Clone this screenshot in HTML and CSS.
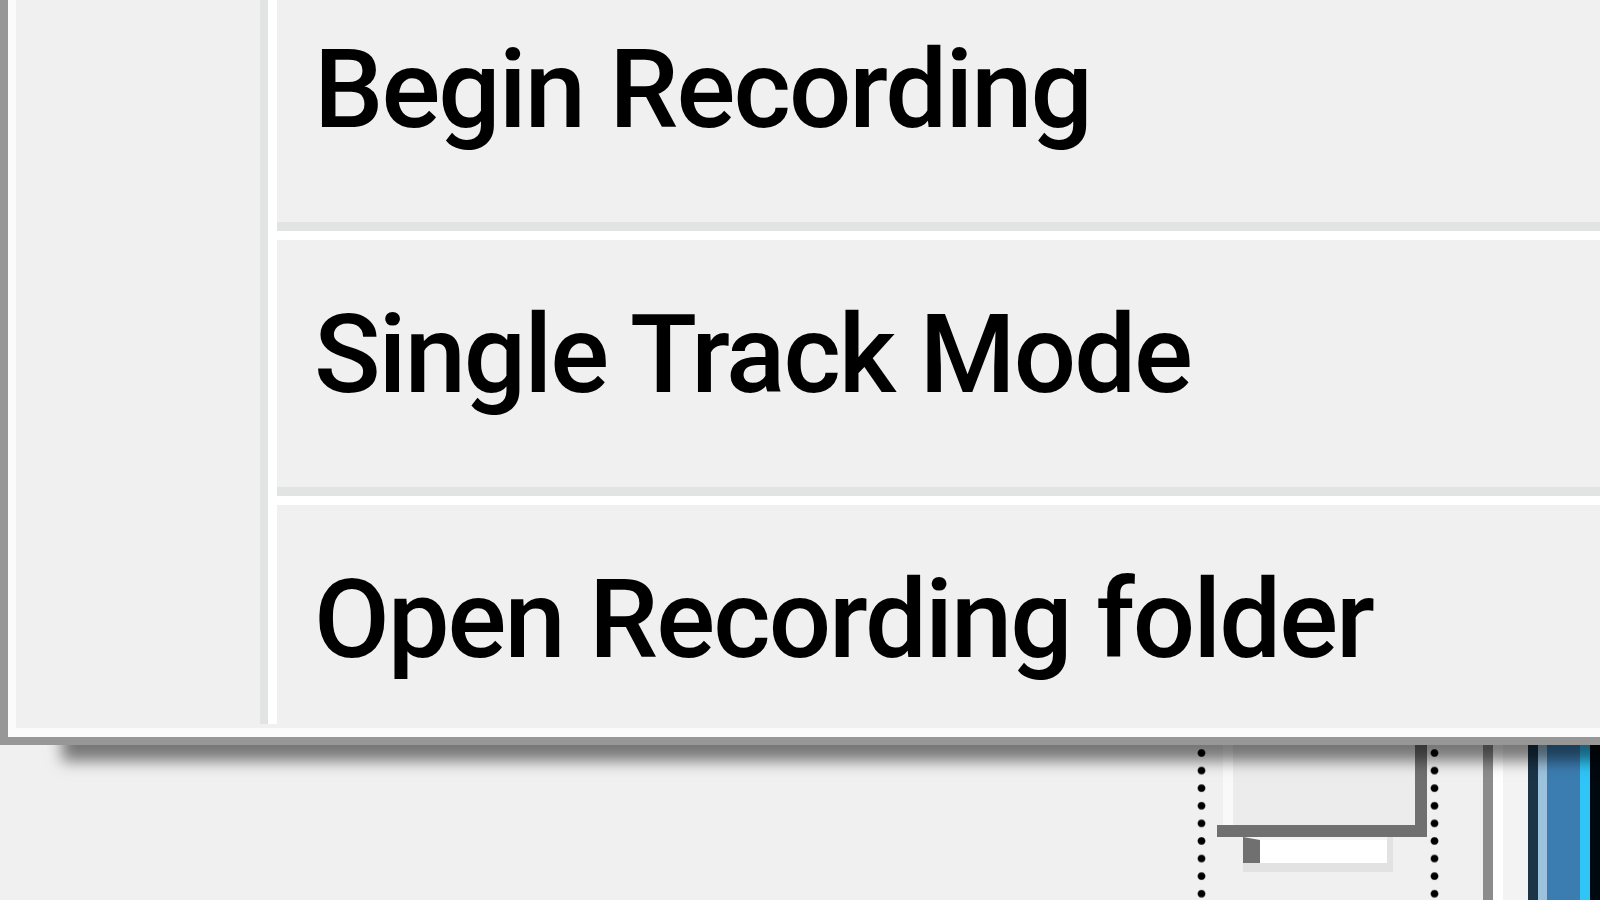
FILE: index.html
```html
<!DOCTYPE html>
<html lang="en">
<head>
<meta charset="utf-8">
<title>Recording menu</title>
<link rel="stylesheet" href="styles.css">
</head>
<body>
<div class="screen">
  <div class="menu">
    <div class="menu-body">
      <div class="gutter"></div>
      <ul class="list">
        <li class="item">Begin Recording</li>
        <li class="sep"></li>
        <li class="item">Single Track Mode</li>
        <li class="sep"></li>
        <li class="item">Open Recording folder</li>
      </ul>
    </div>
  </div>
  <div class="below">
    <div class="focus">
      <div class="dots"></div>
      <div class="focus-content">
        <div class="raised"></div>
        <div class="field"></div>
      </div>
      <div class="dots"></div>
    </div>
    <div class="vline"></div>
    <div class="vlight"></div>
    <div class="blue"></div>
  </div>
</div>
</body>
</html>
```
FILE: styles.css
```css
html, body {
  margin: 0;
  padding: 0;
  background: #f0f0f0;
}
.screen {
  width: 1600px;
  height: 900px;
  overflow: hidden;
  background: #f0f0f0;
  font-family: Roboto, "Noto Sans", sans-serif;
}
.menu {
  position: relative;
  z-index: 1;
  width: 1700px;
  height: 745px;
  box-sizing: border-box;
  border-left: 8px solid #979797;
  border-bottom: 8px solid #979797;
  background: #f0f0f0;
  box-shadow: 62px 16px 14px rgba(0, 0, 0, 0.5);
}
.menu-body {
  display: flex;
  height: 100%;
  box-sizing: border-box;
  border-left: 8px solid #fbfbfb;
  border-bottom: 9px solid #fbfbfb;
  padding-bottom: 4px;
}
.gutter {
  width: 244px;
  flex: none;
  border-right: 8px solid #e2e3e3;
}
.list {
  list-style: none;
  margin: 0;
  padding: 4px 0 0 0;
  flex: 1;
  border-left: 9px solid #ffffff;
}
.item {
  height: 190px;
  box-sizing: border-box;
  padding: 0 0 19px 37px;
  line-height: 171px;
  font-size: 110px;
  font-weight: 500;
  letter-spacing: -2px;
  color: #000;
  white-space: nowrap;
}
.sep {
  height: 75px;
  box-sizing: border-box;
  padding-top: 28px;
}
.sep::before {
  content: "";
  display: block;
  height: 9px;
  background: #e2e3e3;
  border-bottom: 9px solid #ffffff;
}
.below {
  display: flex;
  height: 155px;
}
.focus {
  display: flex;
  margin-left: 1197px;
  width: 242px;
}
.dots {
  width: 9px;
  flex: none;
  background-image: radial-gradient(circle, #000 3.2px, rgba(0, 0, 0, 0) 4.4px);
  background-size: 9px 17.6px;
  background-position: 0 -0.8px;
}
.focus-content {
  flex: 1;
  display: flex;
  flex-direction: column;
}
.raised {
  margin-left: 11px;
  width: 210px;
  height: 92px;
  box-sizing: border-box;
  border-right: 12px solid #707070;
  border-bottom: 12px solid #707070;
  background: linear-gradient(to right, #f0f0f0 0 6px, #f9f9f9 6px 16px, #ececec 16px);
}
.field {
  margin-left: 37px;
  width: 144px;
  height: 26px;
  box-sizing: border-box;
  border-left: 17px solid #707070;
  border-top: 3px solid #f4f4f4;
  background: #ffffff;
  box-shadow: 6px 0 0 #e2e2e2, 0 9px 0 #e2e2e2, 6px 9px 0 #e2e2e2;
}
.vline {
  margin-left: 44px;
  width: 10px;
  background: #8c8c8c;
}
.vlight {
  width: 35px;
  background: linear-gradient(to right, #ffffff 0 10px, #f3f3f3 10px);
}
.blue {
  width: 72px;
  background: linear-gradient(to right,
    #1b3448 0 10px,
    #9cc2de 10px 19px,
    #3b7db0 19px 52px,
    #2fc5f6 52px 62px,
    #000810 62px);
}
```
